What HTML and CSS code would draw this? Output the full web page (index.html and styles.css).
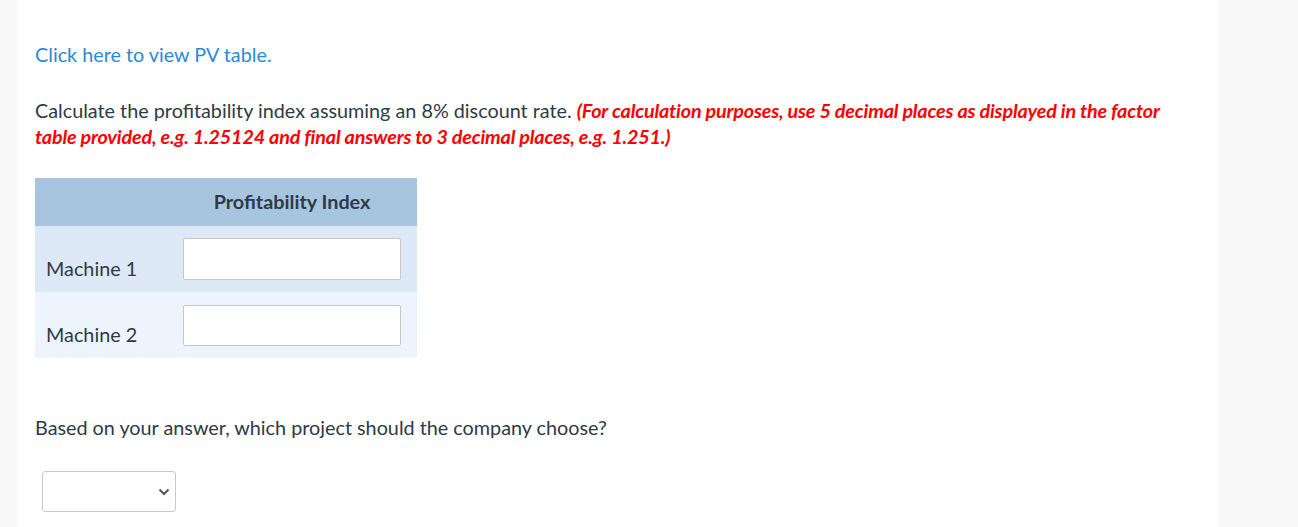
FILE: index.html
```html
<!DOCTYPE html>
<html>
<head>
<meta charset="utf-8">
<link rel="stylesheet" href="styles.css">
</head>
<body>
<div class="page">
  <div class="gutter-left"></div>
  <main class="content">
    <p class="link-line"><a href="#" class="pv-link">Click here to view PV table.</a></p>
    <p class="question">Calculate the profitability index assuming an 8% discount rate. <em class="note">(For calculation purposes, use 5 decimal places as displayed in the factor table provided, e.g. 1.25124 and final answers to 3 decimal places, e.g. 1.251.)</em></p>
    <table class="pi-table">
      <thead>
        <tr><th class="blank"></th><th class="head">Profitability Index</th></tr>
      </thead>
      <tbody>
        <tr class="row-a"><td class="label">Machine 1</td><td class="cell"><input type="text" class="answer"></td></tr>
        <tr class="row-b"><td class="label">Machine 2</td><td class="cell"><input type="text" class="answer"></td></tr>
      </tbody>
    </table>
    <p class="question2">Based on your answer, which project should the company choose?</p>
    <div class="select-wrap">
      <select class="choice"><option></option></select>
      <svg class="chev" width="12" height="8" viewBox="0 0 12 8"><path d="M1.5 1.5 L6 6 L10.5 1.5" fill="none" stroke="#555" stroke-width="2"/></svg>
    </div>
  </main>
  <div class="gutter-right"></div>
</div>
</body>
</html>
```
FILE: styles.css
```css
html, body {
  margin: 0;
  padding: 0;
  height: 100%;
}
body {
  font-family: Lato, "Liberation Sans", sans-serif;
  color: #2d3b45;
  background: #f9f9f9;
}
.page {
  display: flex;
  height: 527px;
  overflow: hidden;
}
.gutter-left {
  width: 17px;
  flex: none;
  background: #f9f9f9;
}
.gutter-right {
  flex: 1;
  background: #f9f9f9;
}
.content {
  width: 1201px;
  flex: none;
  background: #ffffff;
  padding: 41px 0 0 18px;
  box-sizing: border-box;
}
.link-line {
  margin: 0;
  font-size: 19.8px;
  line-height: 26px;
}
.pv-link {
  color: #2b8ad8;
  text-decoration: none;
}
.question {
  margin: 30px 0 0 0;
  font-size: 19.8px;
  line-height: 26px;
  width: 1140px;
}
.note {
  color: #ff0000;
  font-weight: 700;
  letter-spacing: -0.2px;
}
.pi-table {
  margin-top: 29px;
  border-collapse: collapse;
  width: 382px;
}
.pi-table th, .pi-table td {
  padding: 0;
}
.pi-table thead tr {
  background: #a7c5de;
  height: 48px;
}
.head {
  font-size: 19.8px;
  font-weight: 700;
  color: #2d3b45;
  text-align: center;
  padding: 0 16px 3px 0 !important;
}
.blank {
  width: 148px;
}
.row-a {
  background: #dde9f7;
  height: 66px;
}
.row-b {
  background: #edf4fd;
  height: 66px;
}
.label {
  font-size: 19.8px;
  vertical-align: bottom;
  padding: 0 0 11px 11px !important;
  line-height: 26px;
}
.cell {
  vertical-align: top;
  padding-top: 12px !important;
}
.answer {
  display: block;
  width: 218px;
  height: 42px;
  box-sizing: border-box;
  border: 1px solid #c8c8c8;
  border-radius: 2px;
  background: #fff;
  margin: 0;
  padding: 0 6px;
  font: inherit;
}
.row-b .cell {
  padding-top: 13px !important;
}
.row-b .answer {
  height: 41px;
}
.question2 {
  margin: 56px 0 0 0;
  font-size: 19.8px;
  line-height: 26px;
}
.select-wrap {
  position: relative;
  margin: 31px 0 0 7px;
  width: 134px;
  height: 41px;
}
.choice {
  appearance: none;
  -webkit-appearance: none;
  width: 134px;
  height: 41px;
  box-sizing: border-box;
  border: 1px solid #c8c8c8;
  border-radius: 3px;
  background: #fff;
  margin: 0;
  font: inherit;
}
.chev {
  position: absolute;
  right: 6px;
  top: 17px;
  pointer-events: none;
}
```
